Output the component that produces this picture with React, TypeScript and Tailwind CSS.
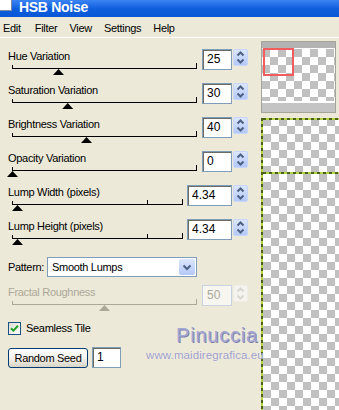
import React from "react";

type RowProps = {
  label: string;
  value: string;
  thumb: number;
  track: number;
  leftW: string;
  fieldW: string;
  midTick?: number;
  disabled?: boolean;
};

function Spin({ disabled }: { disabled?: boolean }) {
  const c = disabled ? "#d9d8d0" : "#4d6185";
  return (
    <div
      className={`ml-[1px] h-[17px] w-[15px] rounded-[2px] border ${
        disabled ? "border-[#eeede6] bg-[#f4f3ee]" : "border-[#c6d6fc] bg-gradient-to-b from-[#dce6fd] to-[#b4c8f6]"
      }`}
    >
      <svg width="13" height="15" viewBox="0 0 13 15" className="block">
        <path d="M3.5 5.5 L6.5 2.5 L9.5 5.5" fill="none" stroke={c} strokeWidth="2" />
        <path d="M3.5 9.5 L6.5 12.5 L9.5 9.5" fill="none" stroke={c} strokeWidth="2" />
      </svg>
    </div>
  );
}

function Field({ value, w, disabled }: { value: string; w: string; disabled?: boolean }) {
  return (
    <div
      className={`${w} h-[21px] border pl-[4px] text-[12px] leading-[19px] tracking-normal ${
        disabled
          ? "border-[#c9d2e0] bg-[#f7f6f1] text-[#aca899]"
          : "border-[#7f9db9] bg-white text-black shadow-[inset_1px_1px_0_#6d6b62]"
      }`}
    >
      {value}
    </div>
  );
}

function SliderRow({ label, value, thumb, track, leftW, fieldW, midTick, disabled }: RowProps) {
  const ink = disabled ? "#aca899" : "#000000";
  return (
    <div className="flex h-[34px]">
      <div className={`${leftW} pl-[8px]`}>
        <div className={`h-[14px] leading-[14px] ${disabled ? "text-[#aca899]" : "text-black"}`}>{label}</div>
        <svg width={track} height="14" className="ml-[4px] block overflow-visible">
          <rect x="0" y="5" width={track} height="1" fill={ink} />
          <rect x="0" y="2" width="1" height="3" fill={ink} />
          <rect x={track - 1} y="0" width="1" height="5" fill={ink} />
          {midTick !== undefined && <rect x={midTick} y="1" width="1" height="4" fill={ink} />}
          <polygon points={`${thumb},6 ${thumb - 5.5},12 ${thumb + 5.5},12`} fill={ink} />
        </svg>
      </div>
      <Field value={value} w={fieldW} disabled={disabled} />
      <Spin disabled={disabled} />
    </div>
  );
}

const checker =
  "bg-[image:repeating-conic-gradient(#ffffff_0_25%,#c0c0c0_0_50%)] bg-[length:16px_16px]";

export default function App() {
  return (
    <div className="relative h-[410px] w-[339px] overflow-hidden bg-[#ece9d8] font-['Liberation_Sans',Arial,sans-serif] text-[11px] tracking-[-0.3px] text-black">
      {/* title bar */}
      <div className="flex h-[17px] items-start overflow-hidden bg-gradient-to-b from-[#3a84f4] via-[#0f5fdd] to-[#0856d5]">
        <div className="h-[11px] w-[12px] border-b border-r border-[#7c8aa6] bg-white" />
        <span className="ml-[7px] text-[14px] font-bold leading-[15px] tracking-[-0.3px] text-white">HSB Noise</span>
      </div>

      {/* menu */}
      <div className="flex h-[21px] items-center gap-[12px] border-b border-white pl-[3px] pt-[2px]">
        <span className="mr-[2px]">Edit</span>
        <span>Filter</span>
        <span>View</span>
        <span>Settings</span>
        <span>Help</span>
      </div>

      <div className="flex">
        {/* controls */}
        <div className="w-[258px] pt-[11px]">
          <SliderRow label="Hue Variation" value="25" thumb={46.5} track={185} leftW="w-[202px]" fieldW="w-[30px]" />
          <SliderRow label="Saturation Variation" value="30" thumb={55.7} track={185} leftW="w-[202px]" fieldW="w-[30px]" />
          <SliderRow label="Brightness Variation" value="40" thumb={74.5} track={185} leftW="w-[202px]" fieldW="w-[30px]" />
          <SliderRow label="Opacity Variation" value="0" thumb={0.5} track={185} leftW="w-[202px]" fieldW="w-[30px]" />
          <SliderRow label="Lump Width (pixels)" value="4.34" thumb={5.5} track={171} midTick={135} leftW="w-[187px]" fieldW="w-[45px]" />
          <SliderRow label="Lump Height (pixels)" value="4.34" thumb={5.5} track={171} midTick={135} leftW="w-[187px]" fieldW="w-[45px]" />

          <div className="mt-[4px] flex h-[20px] items-center pl-[8px]">
            <span className="w-[39px]">Pattern:</span>
            <div className="flex h-[20px] w-[150px] border border-[#7f9db9] bg-white">
              <span className="flex-1 pl-[4px] leading-[18px]">Smooth Lumps</span>
              <div className="m-px flex w-[16px] items-center justify-center rounded-[2px] bg-gradient-to-b from-[#dce6fd] to-[#b4c8f6]">
                <svg width="10" height="7" viewBox="0 0 10 7">
                  <path d="M1.5 1.5 L5 5 L8.5 1.5" fill="none" stroke="#4d6185" strokeWidth="2" />
                </svg>
              </div>
            </div>
          </div>

          <div className="mt-[8px]">
            <SliderRow label="Fractal Roughness" value="50" thumb={92.5} track={185} leftW="w-[202px]" fieldW="w-[30px]" disabled />
          </div>

          <div className="mt-[3px] flex h-[13px] items-center pl-[8px]">
            <div className="flex h-[13px] w-[13px] items-center justify-center border border-[#1c5180] bg-gradient-to-br from-[#dcdcd6] to-white">
              <svg width="9" height="9" viewBox="0 0 9 9">
                <path d="M1 4.2 L3.4 6.6 L8 1.8" fill="none" stroke="#21a121" strokeWidth="2" />
              </svg>
            </div>
            <span className="ml-[5px] leading-[13px]">Seamless Tile</span>
          </div>

          <div className="mt-[12px] flex items-center gap-[4px] pl-[8px]">
            <button className="h-[20px] w-[80px] rounded-[3px] border border-[#003c74] bg-gradient-to-b from-white via-[#f3f2ec] to-[#d8d4c6] text-[11px] leading-[18px] tracking-[-0.3px] text-black">
              Random Seed
            </button>
            <Field value="1" w="w-[29px]" />
          </div>
        </div>

        {/* previews */}
        <div className="flex-1 pl-[3px] pt-[3px]">
          <div className="relative flex h-[72px] w-[75px] flex-col border border-[#a4a39c] bg-white">
            <div className="h-[6px] bg-[#b3b3b3]" />
            <div className="h-px bg-white" />
            <div className={`flex-1 ${checker}`} />
            <div className="h-[2px] bg-white" />
            <div className="h-[9px] bg-[#c4c4c4]" />
            <div className="absolute left-[1px] top-[6px] h-[28px] w-[31px] border-2 border-[#f15c5c]" />
          </div>

          <div className="mt-[5px] flex h-[292px]">
            <div className="w-[2px] bg-[image:repeating-linear-gradient(180deg,#4b6414_0_3px,#b8d247_3px_6px)]" />
            <div className={`flex flex-1 flex-col ${checker}`}>
              <div className="h-[2px] bg-[image:repeating-linear-gradient(90deg,#4b6414_0_3px,#b8d247_3px_6px)]" />
              <div className="h-[52px]" />
              <div className="h-[2px] bg-[image:repeating-linear-gradient(90deg,#4b6414_0_3px,#b8d247_3px_6px)]" />
            </div>
          </div>
        </div>
      </div>

      {/* watermark */}
      <div className="absolute left-[176px] top-[324px] text-[20px] leading-[22px] tracking-[0.8px] text-[#a3a5d3] [text-shadow:1px_1px_0_#7f81ad]">
        Pinuccia
      </div>
      <div className="absolute left-[146px] top-[349px] text-[11.5px] leading-[12px] tracking-[0.1px] text-[#9c9dc6] [text-shadow:0_0_1px_#ffffff]">
        www.maidiregrafica.eu
      </div>
    </div>
  );
}
